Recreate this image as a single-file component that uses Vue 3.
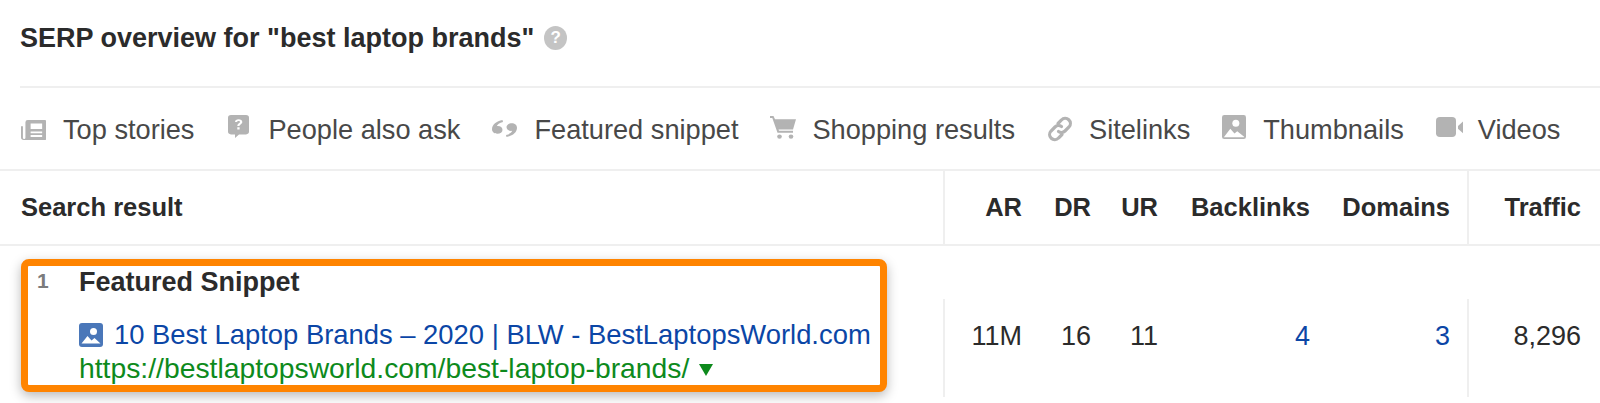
<template>
  <div class="serp">
    <h2 class="title">
      SERP overview for "best laptop brands"
      <span class="help">?</span>
    </h2>

    <div class="features">
      <div class="feature">
        <svg width="25" height="22" viewBox="0 0 26 24" preserveAspectRatio="none">
          <path d="M7 1h18a1 1 0 0 1 1 1v20a1 1 0 0 1-1 1H3a3 3 0 0 1-3-3V8h2v12.500a1.300 1.300 0 0 0 2.600 0V3.500A2.500 2.500 0 0 1 7 1z" fill="#b3b3b3" />
          <path d="M10 5h12v6H10zM10 13.500h12v2H10zM10 17.500h12v2H10z" fill="#fff" />
        </svg>
        <span>Top stories</span>
      </div>
      <div class="feature wide raised spaced">
        <svg width="21" height="24" viewBox="0 0 21 26" preserveAspectRatio="none">
          <path d="M3 0h15a3 3 0 0 1 3 3v15a3 3 0 0 1-3 3h-7l-4 4v-4H3a3 3 0 0 1-3-3V3a3 3 0 0 1 3-3z" fill="#b3b3b3" />
          <path d="M7 7.500c0-2 1.500-3 3.600-3s3.700 1.100 3.700 3c0 2.500-2.800 2.500-2.800 4.500H9.300c0-3 2.700-3 2.700-4.400 0-.8-.6-1.200-1.400-1.200-.9 0-1.400.5-1.500 1.100zM9.300 13.300h2.300v2.300H9.300z" fill="#fff" />
        </svg>
        <span>People also ask</span>
      </div>
      <div class="feature lifted">
        <svg width="25" height="17" viewBox="0 0 25 21" preserveAspectRatio="none">
          <path d="M10.500 0C4.500 1.500 0 5.500 0 11.500 0 14.800 2.200 17 5.300 17s5.200-2.100 5.200-4.800c0-2.800-2-4.700-4.700-4.700-.5 0-.8 0-1 .1C5.300 5.500 7.500 3.500 11 2.400z" fill="#b3b3b3" />
          <path d="M14.500 21C20.500 19.500 25 15.500 25 9.500 25 6.200 22.800 4 19.700 4s-5.200 2.100-5.200 4.800c0 2.800 2 4.700 4.700 4.700.5 0 .8 0 1-.1-.5 2.100-2.700 4.100-6.200 5.200z" fill="#b3b3b3" />
        </svg>
        <span>Featured snippet</span>
      </div>
      <div class="feature raised tight">
        <svg width="26" height="23" viewBox="0 0 26 24" preserveAspectRatio="none">
          <path d="M0 0h3.500l1.500 3.500h21l-3 10.500H8.500l.5 1.500h14v2H7.500L2.300 2H0z" fill="#b3b3b3" />
          <circle cx="9.500" cy="21.500" r="2.300" fill="#b3b3b3" />
          <circle cx="21" cy="21.500" r="2.300" fill="#b3b3b3" />
        </svg>
        <span>Shopping results</span>
      </div>
      <div class="feature tight lifted">
        <svg width="26" height="26" viewBox="0 0 26 26" fill="none" stroke="#b3b3b3" stroke-width="3.200" stroke-linecap="round">
          <path d="M11 7.500l3.500-3.500a5 5 0 0 1 7.500 7l-4 4a5 5 0 0 1-6.500.5" />
          <path d="M15 18.500L11.500 22A5 5 0 0 1 4 15l4-4a5 5 0 0 1 6.500-.5" />
        </svg>
        <span>Sitelinks</span>
      </div>
      <div class="feature raised">
        <svg width="24" height="24" viewBox="0 0 26 26">
          <rect width="26" height="26" rx="2.500" fill="#b3b3b3" />
          <circle cx="15" cy="9" r="3.800" fill="#fff" />
          <path d="M2 24l7-9 4.500 5 3-2.500 7.500 6v.500H2z" fill="#fff" />
        </svg>
        <span>Thumbnails</span>
      </div>
      <div class="feature narrow raised">
        <svg width="27" height="20" viewBox="0 0 27 22" preserveAspectRatio="none">
          <rect width="20" height="22" rx="4" fill="#b3b3b3" />
          <path d="M22 10l5-5v13l-5-5z" fill="#b3b3b3" />
        </svg>
        <span>Videos</span>
      </div>
    </div>

    <div class="table">
      <div class="cell head first">Search result</div>
      <div class="cell head sep">AR</div>
      <div class="cell head">DR</div>
      <div class="cell head">UR</div>
      <div class="cell head">Backlinks</div>
      <div class="cell head domains">Domains</div>
      <div class="cell head sep traffic">Traffic</div>

      <div class="result">
        <div class="snippet">
          <span class="pos">1</span>
          <div class="body">
            <div class="snippet-title">Featured Snippet</div>
            <div class="link">
              <svg width="24" height="24" viewBox="0 0 24 24">
                <rect width="24" height="24" rx="3" fill="#4a77b9" />
                <circle cx="14.500" cy="8.500" r="3.500" fill="#fff" />
                <path d="M2.500 20.500l6-7.500 4 4.500 3-2.500 6 5.500z" fill="#fff" />
              </svg>
              <span>10 Best Laptop Brands – 2020 | BLW - BestLaptopsWorld.com</span>
            </div>
            <div class="url">
              https://bestlaptopsworld.com/best-laptop-brands/
              <i class="caret"></i>
            </div>
          </div>
        </div>
      </div>
      <div class="val sep">11M</div>
      <div class="val">16</div>
      <div class="val">11</div>
      <div class="val blue">4</div>
      <div class="val blue domains">3</div>
      <div class="val sep traffic">8,296</div>
    </div>
  </div>
</template>

<script setup>
</script>

<style>
body { background: #fff; }
</style>

<style scoped>
.serp {
  width: 1600px; height: 403px; overflow: hidden; background: #fff; color: #2b2b2b;
  font-family: "Liberation Sans", Arial, sans-serif;
}
.title {
  margin: 0 0 0 20px; height: 88px; display: flex; align-items: center; gap: 10px;
  font-size: 27px; font-weight: 700; color: #2b2b2b; padding-bottom: 10px; box-sizing: border-box;
  border-bottom: 2px solid #efefef;
}
.help {
  width: 23px; height: 24px; border-radius: 50%; background: #c4c4c4; color: #fff;
  font-size: 17px; display: flex; align-items: center; justify-content: center;
}
.features {
  height: 83px; padding: 2px 0 0 21px; display: flex; align-items: center; gap: 32px;
  border-bottom: 2px solid #efefef; font-size: 27.2px; color: #484848; box-sizing: border-box;
}
.feature { display: flex; align-items: center; gap: 17px; white-space: nowrap; }
.feature.wide { gap: 19px; }
.feature.narrow { gap: 15px; }
.feature.tight { gap: 16px; }
.feature.spaced { margin-left: 2px; }
.feature.raised svg { margin-top: -5px; }
.feature.lifted svg { margin-top: -2px; }
.table {
  display: grid;
  grid-template-columns: 943px 79px 69px 67px 152px 157px 133px;
  grid-template-rows: 75px 152px;
}
.cell {
  display: flex; align-items: center; justify-content: flex-end;
  font-size: 25.5px; font-weight: 700; color: #2b2b2b;
  border-bottom: 2px solid #efefef;
}
.cell.first { justify-content: flex-start; padding-left: 21px; }
.sep { border-left: 2px solid #efefef; }
.domains { padding-right: 17px; }
.traffic { padding-right: 19px; }
.result { padding: 13px 0 0 21px; }
.snippet {
  width: 866px; height: 133px; box-sizing: border-box;
  border: 7px solid #ff8400; border-radius: 8px; background: #fff;
  box-shadow: 0 4px 12px rgba(0, 0, 0, 0.28);
  display: flex; position: relative;
}
.pos { width: 51px; padding: 3px 0 0 9px; box-sizing: border-box; font-size: 21px; font-weight: 700; color: #7c7c7c; }
.snippet-title { font-size: 27px; font-weight: 700; color: #2b2b2b; margin-top: 1px; }
.link {
  display: flex; align-items: center; gap: 11px; margin-top: 21px;
  font-size: 27.4px; color: #0b46a6; white-space: nowrap;
}
.url { font-size: 28.3px; color: #0d8a1c; white-space: nowrap; margin-top: 1px; display: flex; align-items: center; gap: 10px; }
.caret {
  width: 0; height: 0; border-left: 7px solid transparent; border-right: 7px solid transparent;
  border-top: 12px solid #0d8a1c; margin-top: 2px;
}
.val {
  display: flex; justify-content: flex-end; align-items: center;
  font-size: 27px; color: #2b2b2b; margin-top: 53px; height: 98px; padding-bottom: 24px; box-sizing: border-box;
}
.val.blue { color: #0b46a6; }
</style>
